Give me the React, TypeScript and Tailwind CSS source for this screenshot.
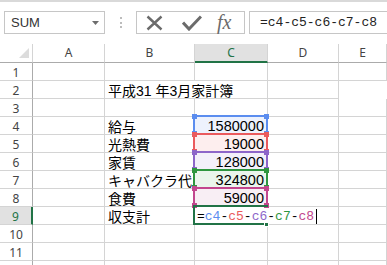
import React from "react";

// Excel-like sheet: formula bar on top, grid below, coloured reference boxes over C4:C8.

const jp = "font-['Liberation_Sans','Noto_Sans_CJK_JP',sans-serif]";
const hdr = "font-['Noto_Sans',sans-serif] text-[12px] text-[#444]";
const mono = "font-['Liberation_Mono',monospace] text-[13px]";
const cols = "grid grid-cols-[33px_72px_90px_73px_71px_1fr]";

const items = [
  { row: 4, label: "給与", value: "1580000", fill: "bg-[#edf2fd]" },
  { row: 5, label: "光熱費", value: "19000", fill: "bg-[#fdeeee]" },
  { row: 6, label: "家賃", value: "128000", fill: "bg-[#f3f0fa]" },
  { row: 7, label: "キャバクラ代", value: "324800", fill: "bg-[#eaf5ec]" },
  { row: 8, label: "食費", value: "59000", fill: "bg-[#f8eef4]" },
];

// reference boxes, top is relative to the grid (grid starts at y 44)
const refs = [
  { top: 71, box: "border-[#5b8def]", handle: "bg-[#5b8def]" },
  { top: 89, box: "border-[#ea5a5d]", handle: "bg-[#ea5a5d]" },
  { top: 107, box: "border-[#8d66c9]", handle: "bg-[#8d66c9]" },
  { top: 125, box: "border-[#2e963f]", handle: "bg-[#2e963f]" },
  { top: 143, box: "border-[#c2468e]", handle: "bg-[#c2468e]" },
];

const cell = "h-[18px] border-r border-b border-[#d4d4d4] whitespace-nowrap";
const jpText = `${jp} pl-[3px] pt-[3px] text-[14px] leading-[14px] text-black`;

function RowHead({ n, active }: { n?: number; active?: boolean }) {
  return (
    <div
      className={
        active
          ? `${hdr} h-[18px] border-b border-b-[#d4d4d4] border-r-2 border-r-[#217346] bg-[#e1e1e1] pt-[2px] text-center leading-[16px] !text-[#217346]`
          : `${hdr} h-[18px] border-b border-b-[#d4d4d4] border-r border-r-[#ababab] pt-[2px] text-center leading-[16px]`
      }
    >
      {n}
    </div>
  );
}

function Formula() {
  return (
    <>
      <span className="text-black">=</span>
      <span className="text-[#5b8def]">c4</span>
      <span className="text-black">-</span>
      <span className="text-[#ea5a5d]">c5</span>
      <span className="text-black">-</span>
      <span className="text-[#8d66c9]">c6</span>
      <span className="text-black">-</span>
      <span className="text-[#2e963f]">c7</span>
      <span className="text-black">-</span>
      <span className="text-[#c2468e]">c8</span>
    </>
  );
}

function Toolbar() {
  return (
    <div className="flex h-[23px] items-stretch pl-[4px]">
      <div className="flex w-[101px] items-center justify-between border border-[#c6c6c6] pl-[6px] pr-[5px]">
        <span className="font-['Liberation_Sans',sans-serif] text-[13px] text-[#333]">SUM</span>
        <svg width="7" height="4" viewBox="0 0 7 4">
          <polygon points="0,0 7,0 3.5,4" fill="#6d6d6d" />
        </svg>
      </div>
      <div className="flex w-[31px] flex-col items-center justify-center gap-[2.5px]">
        <span className="h-[2px] w-[2px] bg-[#bcbcbc]" />
        <span className="h-[2px] w-[2px] bg-[#bcbcbc]" />
        <span className="h-[2px] w-[2px] bg-[#bcbcbc]" />
      </div>
      <div className="flex w-[109px] items-center border border-[#c6c6c6] pl-[9px]">
        <svg width="17" height="16" viewBox="0 0 17 16">
          <path d="M1.5 1.5 L15.5 14.5 M15.5 1.5 L1.5 14.5" stroke="#6b6b6b" strokeWidth="2.4" fill="none" />
        </svg>
        <svg className="ml-[19px]" width="20" height="16" viewBox="0 0 20 16">
          <path d="M1 7.5 L7 14 L19 1.5" stroke="#6b6b6b" strokeWidth="3" fill="none" strokeLinejoin="miter" />
        </svg>
        <span className="ml-[15px] -mt-[2px] font-['Liberation_Serif',serif] text-[20px] italic leading-none text-[#6b6b6b]">
          fx
        </span>
      </div>
      <div className="ml-[4px] flex flex-1 items-center border border-r-0 border-[#c6c6c6] pl-[10px]">
        <span className={`${mono} text-[#222]`}>=c4-c5-c6-c7-c8</span>
      </div>
    </div>
  );
}

function Sheet() {
  return (
    <div className="relative">
      {/* column headers */}
      <div className={cols}>
        <div className="flex h-[19px] items-end justify-end border-r border-b border-r-[#d4d4d4] border-b-[#ababab] pr-[3px] pb-[4px]">
          <svg width="10" height="10" viewBox="0 0 10 10">
            <polygon points="10,0 10,10 0,10" fill="#dcdcdc" />
          </svg>
        </div>
        {["A", "B", "C", "D", "E"].map((c) => (
          <div
            key={c}
            className={
              c === "C"
                ? `${hdr} h-[19px] border-r border-r-[#d4d4d4] border-b-2 border-b-[#217346] bg-[#e1e1e1] text-center leading-[18px] !text-[#217346]`
                : `${hdr} h-[19px] border-r border-b border-r-[#d4d4d4] border-b-[#ababab] text-center leading-[18px]`
            }
          >
            {c}
          </div>
        ))}
      </div>

      {/* rows */}
      {Array.from({ length: 12 }, (_, i) => i + 1).map((n) => {
        const item = items.find((it) => it.row === n);
        return (
          <div key={n} className={cols}>
            <RowHead n={n < 12 ? n : undefined} active={n === 9} />
            <div className={cell} />
            {n === 2 ? (
              <div className={`${cell} col-span-2 ${jpText}`}>平成31 年3月家計簿</div>
            ) : n === 9 ? (
              <>
                <div className={`${cell} ${jpText}`}>収支計</div>
                <div className={`${cell} col-span-2 flex items-center bg-white pl-[2px] pt-[1px]`}>
                  <span className={`${mono} leading-[15px]`}>
                    <Formula />
                  </span>
                  <span className="ml-[2px] h-[15px] w-px bg-black" />
                </div>
              </>
            ) : (
              <>
                <div className={`${cell} ${jpText}`}>{item?.label}</div>
                <div
                  className={`${cell} ${item?.fill ?? ""} pr-[3px] pt-[2px] text-right font-['Liberation_Sans',sans-serif] text-[14.5px] leading-[15px] text-black`}
                >
                  {item?.value}
                </div>
              </>
            )}
            {n !== 2 && n !== 9 && <div className={cell} />}
            <div className={cell} />
          </div>
        );
      })}

      {/* reference boxes over C4:C8 */}
      {refs.map((r, i) => (
        <div key={i} className="absolute left-[193px] h-[20px] w-[75px]" style={{ top: r.top }}>
          <div className={`absolute inset-0 border-2 ${r.box}`} />
          <span className={`absolute -left-[1px] -top-[1px] h-[5px] w-[5px] ${r.handle}`} />
          <span className={`absolute -right-[1px] -top-[1px] h-[5px] w-[5px] ${r.handle}`} />
          <span className={`absolute -bottom-[1px] -left-[1px] h-[5px] w-[5px] ${r.handle}`} />
          <span className={`absolute -bottom-[1px] -right-[1px] h-[5px] w-[5px] ${r.handle}`} />
        </div>
      ))}

      {/* active cell C9 */}
      <div className="absolute left-[193px] top-[161px] h-[20px] w-[75px] border-2 border-r-0 border-[#217346]" />
      <span className="absolute left-[264px] top-[178px] h-[5px] w-[5px] border border-white bg-[#217346]" />
    </div>
  );
}

export default function App() {
  return (
    <div className="h-[265px] w-[387px] overflow-hidden bg-white">
      <div className="h-[2px] bg-[#d9d9d9]" />
      <div className="pt-[9px]">
        <Toolbar />
      </div>
      <div className="pt-[10px]">
        <Sheet />
      </div>
    </div>
  );
}
